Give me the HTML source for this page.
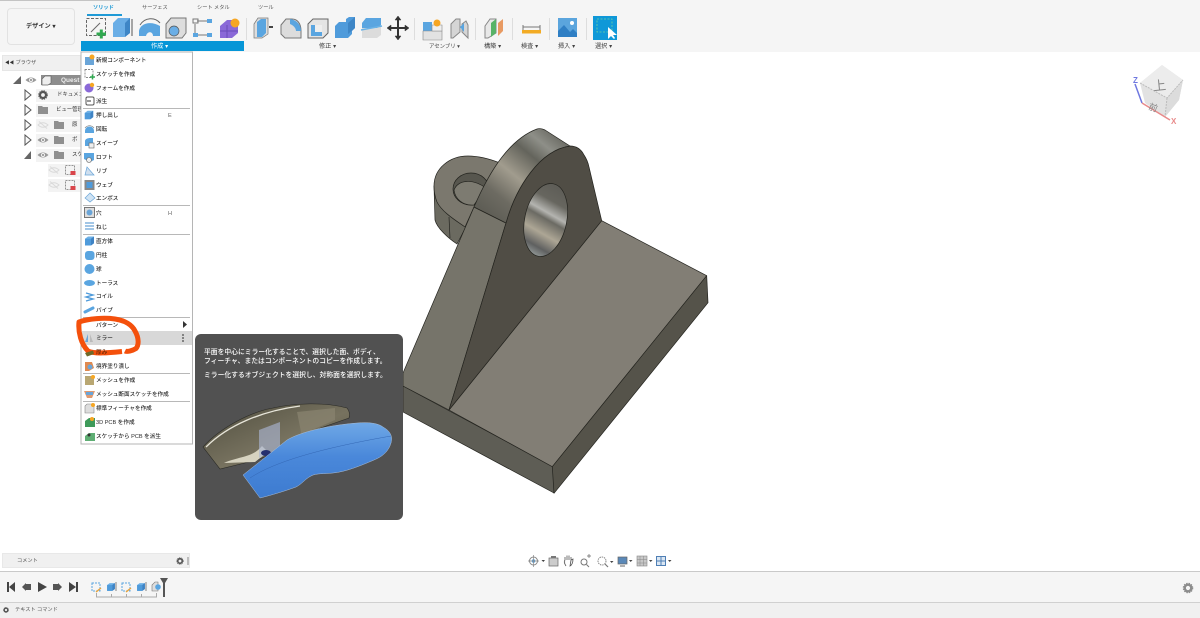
<!DOCTYPE html>
<html lang="ja"><head><meta charset="utf-8"><title>Fusion 360</title>
<style>
html,body{margin:0;padding:0;width:1200px;height:618px;overflow:hidden;background:#fff}
body{font-family:"Liberation Sans","Noto Sans CJK JP",sans-serif;position:relative}
.a{position:absolute}
.t{position:absolute;white-space:nowrap;line-height:10px;color:#444}
.m{position:absolute;left:95px;font-size:5.6px;line-height:10px;color:#2c2c2c;white-space:nowrap;font-weight:500;margin-top:1px}
.s{position:absolute;left:83px;width:107px;height:1px;background:#b8b8b8}
.l{position:absolute;font-size:6.2px;color:#444;line-height:8px;white-space:nowrap;margin-top:1px}
#w{position:absolute;left:0;top:0;width:1200px;height:618px;filter:blur(.35px)}
svg{position:absolute;left:0;top:0}
</style></head><body><div id="w">
<!-- toolbar -->
<div class="a" style="left:0;top:0;width:1200px;height:52px;background:#f5f5f5"></div>
<div class="a" style="left:0;top:0;width:120px;height:1px;background:#c4c4c4"></div>
<div class="a" style="left:7px;top:8px;width:68px;height:37px;border:1px solid #e2e2e2;border-radius:4px;background:#f5f5f5;box-sizing:border-box"></div>
<div class="t" style="left:26px;top:22px;font-size:6.2px;font-weight:700;color:#333">デザイン ▾</div>
<div class="t" style="left:93px;top:3px;font-size:5.2px;font-weight:700;color:#1f9ad6">ソリッド</div>
<div class="a" style="left:87px;top:14px;width:35px;height:2px;background:#1f9ad6"></div>
<div class="t" style="left:142px;top:3px;font-size:5.2px;color:#555">サーフェス</div>
<div class="t" style="left:197px;top:3px;font-size:5.2px;color:#555">シート メタル</div>
<div class="t" style="left:258px;top:3px;font-size:5.2px;color:#555">ツール</div>
<div class="a" style="left:81px;top:41px;width:163px;height:10px;background:#0696d7"></div>
<div class="t" style="left:151px;top:42px;font-size:6.2px;color:#fff">作成 ▾</div>
<div class="l" style="left:319px;top:42px">修正 ▾</div>
<div class="l" style="left:429px;top:42px;font-size:5.4px">アセンブリ ▾</div>
<div class="l" style="left:484px;top:42px">構築 ▾</div>
<div class="l" style="left:521px;top:42px">検査 ▾</div>
<div class="l" style="left:558px;top:42px">挿入 ▾</div>
<div class="l" style="left:595px;top:42px">選択 ▾</div>
<!-- browser -->
<div class="a" style="left:2px;top:55px;width:79px;height:16px;background:#f0f0f0;border:1px solid #e6e6e6;box-sizing:border-box"></div>
<div class="t" style="left:5px;top:58px;font-size:5.2px;color:#555"><span style="font-size:4.5px;color:#333">◀◀</span>&nbsp;ブラウザ</div>
<div class="a" style="left:41px;top:75px;width:40px;height:10px;background:#8d8d8d"></div>
<div class="t" style="left:61px;top:76px;font-size:6.5px;font-weight:700;color:#eee">Quest</div>
<div class="a" style="left:36px;top:89px;width:45px;height:13px;background:#f3f3f3"></div>
<div class="a" style="left:36px;top:104px;width:45px;height:13px;background:#f3f3f3"></div>
<div class="a" style="left:36px;top:119px;width:45px;height:13px;background:#f3f3f3"></div>
<div class="a" style="left:36px;top:134px;width:45px;height:13px;background:#f3f3f3"></div>
<div class="a" style="left:36px;top:149px;width:45px;height:13px;background:#f3f3f3"></div>
<div class="a" style="left:48px;top:164px;width:33px;height:13px;background:#f3f3f3"></div>
<div class="a" style="left:48px;top:179px;width:33px;height:13px;background:#f3f3f3"></div>
<div class="t" style="left:57px;top:90px;font-size:5.4px;color:#333">ドキュメント</div>
<div class="t" style="left:56px;top:105px;font-size:5.4px;color:#333">ビュー管理</div>
<div class="t" style="left:72px;top:120px;font-size:5.4px;color:#333">原</div>
<div class="t" style="left:72px;top:135px;font-size:5.4px;color:#333">ボ</div>
<div class="t" style="left:72px;top:150px;font-size:5.4px;color:#333">スケ</div>
<!-- bottom panels -->
<div class="a" style="left:2px;top:553px;width:188px;height:15px;background:#f0f0f0;border:1px solid #e8e8e8;box-sizing:border-box"></div>
<div class="t" style="left:17px;top:556px;font-size:5.2px;color:#555">コメント</div>
<div class="a" style="left:0;top:571px;width:1200px;height:1px;background:#c9c9c9"></div>
<div class="a" style="left:0;top:572px;width:1200px;height:31px;background:#f5f5f5"></div>
<div class="a" style="left:0;top:602px;width:1200px;height:1px;background:#d0d0d0"></div>
<div class="a" style="left:0;top:603px;width:1200px;height:15px;background:#f0f0f0"></div>
<div class="t" style="left:15px;top:605px;font-size:5.2px;color:#555">テキスト コマンド</div>

<svg width="1200" height="618" viewBox="0 0 1200 618">
<defs>
<linearGradient id="band" gradientUnits="userSpaceOnUse" x1="555" y1="135" x2="490" y2="215"><stop offset="0" stop-color="#6f6f68"/><stop offset=".14" stop-color="#8e8f88"/><stop offset=".3" stop-color="#64645c"/><stop offset=".55" stop-color="#a19c8e"/><stop offset=".8" stop-color="#6d6b62"/><stop offset="1" stop-color="#5f5e56"/></linearGradient>
<linearGradient id="hole" gradientUnits="userSpaceOnUse" x1="556" y1="188" x2="535" y2="254"><stop offset="0" stop-color="#5f5e58"/><stop offset=".2" stop-color="#67665f"/><stop offset=".38" stop-color="#b4b4b0"/><stop offset=".47" stop-color="#6b6a63"/><stop offset=".68" stop-color="#ada695"/><stop offset=".88" stop-color="#5f6060"/><stop offset="1" stop-color="#8d9392"/></linearGradient>
<linearGradient id="blue" x1="0" y1="0" x2="0" y2="1"><stop offset="0" stop-color="#6fa8e6"/><stop offset=".45" stop-color="#4a88da"/><stop offset="1" stop-color="#3d7bd0"/></linearGradient>
<linearGradient id="metal" x1="0" y1="0" x2="1" y2="1"><stop offset="0" stop-color="#4f4d3e"/><stop offset=".55" stop-color="#77725f"/><stop offset="1" stop-color="#55523f"/></linearGradient>
<g id="eye"><path d="M-5.500 0Q0-5 5.500 0Q0 5-5.500 0Z" fill="#9a9a9a"/><circle r="2" fill="#f3f3f3"/><circle r="1" fill="#888"/></g>
<g id="eyeoff" opacity=".35"><path d="M-5 0Q0-4.500 5 0Q0 4.500-5 0Z" fill="none" stroke="#aaa"/><path d="M-4-3.500L4 3.500" stroke="#aaa"/></g>
<path id="folder" d="M-5-4H-1L0-3H5V4H-5Z" fill="#8f8f8f"/>
<path id="tri" d="M-3-5L3 0L-3 5Z" fill="#f8f8f8" stroke="#555"/>
<g id="sk"><rect x="-4.500" y="-4.500" width="9" height="9" fill="none" stroke="#777" stroke-dasharray="2 1" stroke-width=".8"/><rect x="0.500" y="1" width="5" height="4" fill="#d9444a"/></g>
<g id="gear"><circle r="3" fill="none" stroke="#555" stroke-width="2.200"/><circle r="4.300" fill="none" stroke="#555" stroke-width="1" stroke-dasharray="1.300 1"/></g>
<g id="cube"><path d="M-6-3L-2-6H6V3L2 6H-6Z" fill="#6fb1e6"/><path d="M-6-3H2V6H-6Z" fill="#4f9bdb"/><path d="M2-3L6-6V3L2 6Z" fill="#3f83c4"/></g>
</defs>

<!-- 3D model -->
<g stroke="#24241f" stroke-width=".7" stroke-linejoin="round">
<path d="M434 186L435 220C437 228 448 238 457 244L480 200L440 190Z" fill="#6b6a60"/>
<path d="M449 217L450 238" fill="none"/>
<path d="M434 186C434 168 450 156 468 156C480 156 490 159 500 163L474 207L465 227C455 220 442 212 437 202C435 197 434 192 434 186Z" fill="#7b786e"/>
<ellipse cx="471" cy="189" rx="18" ry="16" fill="#57564e"/>
<path d="M454 190C458 180 472 178 486 188L474 205C462 206 455 198 454 190Z" fill="#7d7b71"/>
<path d="M403 386V412L554 493V467Z" fill="#5e5d55"/>
<path d="M449 410L601.700 220.700L706.700 275.700L552.300 466.700Z" fill="#827e75"/>
<path d="M706.700 275.700L708 302.700L554 493.300L552.300 466.700Z" fill="#55534a"/>
<path d="M403 373L474 207L506 223L449 410L403 386Z" fill="#76746a"/>
<path d="M449 410L506 223C516 187 540 150 570 146C576 146 581 149 584 155C586 158 588 162 589 167L601.700 220.700Z" fill="#504d45"/>
<path d="M474 207C490 170 510 139 537 129C540 128 543 129 545 130L570 146C540 150 516 187 506 223Z" fill="url(#band)"/>
<ellipse cx="545.700" cy="220" rx="21" ry="37" transform="rotate(12 545.700 220)" fill="url(#hole)"/>
</g>

<!-- menu -->
<rect x="81" y="52" width="111.500" height="392" fill="#fff" stroke="#b5b5b5" stroke-width="1"/>
<rect x="82" y="331" width="110" height="14" fill="#d8d8d8"/>

<!-- tooltip -->
<rect x="195" y="334" width="208" height="186" rx="6" fill="#515151"/>
<path d="M203 447C220 428 250 412 273 408C295 403 325 402 347 408C350 412 350 415 349 418C330 425 305 432 290 443C280 452 268 455 257 460L220 469Z" fill="url(#metal)" stroke="#2a2a25" stroke-width=".6"/>
<path d="M206 447C228 425 262 411 300 406" fill="none" stroke="#e7e5d9" stroke-width="1.300"/>
<path d="M224 463C240 456 252 458 262 446L268 452L255 462Z" fill="#d7d3c0"/>
<path d="M297 412L303 442L312 430L335 420V408Z" fill="#8a8470" opacity=".7"/>
<path d="M259 430L280 422V448L259 458Z" fill="#a9b3cf" opacity=".65"/>
<ellipse cx="266" cy="453" rx="5" ry="3" fill="#26306e"/>
<path d="M243 475L287 440C300 432 330 425 357 423C368 422 378 423 383 427C390 431 393 436 391 443C389 450 384 456 374 460C360 466 345 472 333 473C325 474 316 473 311 476C305 479 302 484 296 487C285 491 272 495 260 498Z" fill="url(#blue)" stroke="#a9bdd6" stroke-width=".5"/>
<path d="M250 478C280 458 340 445 391 436" fill="none" stroke="#3367b5" stroke-width=".5"/>

<!-- toolbar icons -->
<g>
<rect x="86.500" y="18.500" width="19" height="17" fill="none" stroke="#666" stroke-dasharray="3 1.500"/><path d="M91 32L100 23" stroke="#666"/><path d="M96.500 34H106M101.300 29.500V38.500" stroke="#2fa84f" stroke-width="3"/>
<path d="M113 23L118 18H130V33L125 37H113Z" fill="#6aaee6"/><path d="M125 23V37L130 33V18Z" fill="#3e86c6"/><path d="M132 19V36" stroke="#555"/>
<path d="M139 32C139 24 150 20 160 26V36H153C153 31 147 31 146 36H139Z" fill="#5aa5e0"/><path d="M140 25C145 17 155 17 160 23" stroke="#666" fill="none"/>
<path d="M166 24L171 18H186V33L182 38H166Z" fill="#ddd" stroke="#777"/><circle cx="174" cy="31" r="5" fill="#6aaee6" stroke="#555" stroke-width=".7"/>
<path d="M197 21H208M197 35H208M195 24V33" stroke="#777"/><rect x="193" y="19" width="5" height="4" fill="none" stroke="#777"/><rect x="207" y="19" width="5" height="4" fill="#5aa5e0"/><rect x="193" y="33" width="5" height="4" fill="#5aa5e0"/><rect x="207" y="33" width="5" height="4" fill="#5aa5e0"/>
<path d="M220 26L227 20H238V33L232 38H220Z" fill="#8a69d8"/><path d="M227 25V38M220 31H238" stroke="#6a4cb8"/><circle cx="235" cy="23" r="4.500" fill="#f6a623"/>
<rect x="246" y="18" width="1" height="22" fill="#ddd"/>
<path d="M254 24L258 18H268V34L262 38H254Z" fill="#ddd" stroke="#777" stroke-width=".7"/><path d="M257 22L261 19H266V33L262 37H257Z" fill="#5aa5e0"/><path d="M269 27H273" stroke="#444" stroke-width="2"/>
<path d="M281 25L286 19H292C297 19 301 23 301 31V38H285L281 34Z" fill="#dcdcdc" stroke="#777"/><path d="M290 19C297 20 301 25 301 31L296 31C296 28 293 25 290 24Z" fill="#5aa5e0"/>
<path d="M308 24L313 19H328V33L323 38H308Z" fill="#e4e4e4" stroke="#666"/><path d="M311 25H322V36H311Z" fill="#5aa5e0"/><path d="M315 25H322V32H315Z" fill="#eee"/>
<path d="M335 26L339 22H346V19L349 17H355V28L352 31V34L348 38H335Z" fill="#4f9bdb"/><path d="M348 23L355 17V28L348 34Z" fill="#3e86c6"/>
<path d="M362 23L366 18H381V35L377 38H362Z" fill="#dcdcdc"/><path d="M362 23L366 18H381V25L377 28H362Z" fill="#5aa5e0"/><path d="M361 30L382 26" stroke="#6ab2e6" stroke-width="1.500"/>
<g stroke="#333" stroke-width="2" fill="#333"><path d="M389 28H407M398 19V37" fill="none"/><path d="M398 16L395 20H401ZM398 40L395 36H401ZM387 28L391 25V31ZM409 28L405 25V31Z" stroke-width=".5"/></g>
<rect x="414" y="18" width="1" height="22" fill="#ddd"/>
<path d="M423 22H432V40H423Z" fill="#5aa5e0"/><path d="M423 31H442V40H423Z" fill="#e2e2e2" stroke="#888" stroke-width=".6"/><path d="M432 25H442V31H432Z" fill="#efefef" stroke="#888" stroke-width=".6"/><circle cx="437" cy="23" r="3.500" fill="#f6a623"/>
<path d="M451 24L456 19H460V32L453 38H451Z" fill="#d5d5d5" stroke="#888"/><path d="M462 24L466 21L468 25V38L462 32Z" fill="#d5d5d5" stroke="#888"/><path d="M460 27L464 23V32Z" fill="#5aa5e0"/>
<rect x="475" y="18" width="1" height="22" fill="#ddd"/>
<path d="M485 26L490 19H496V33L488 38H485Z" fill="#e8e8e8" stroke="#888"/><path d="M491 23L496 19V33L491 37Z" fill="#58b368"/><path d="M498 23L503 19V31L498 36Z" fill="#e89a62"/>
<rect x="512" y="18" width="1" height="22" fill="#ddd"/>
<path d="M523 25V30M540 25V30M523 27H540" stroke="#777"/><rect x="522" y="30" width="19" height="3.500" fill="#f2ab24"/>
<rect x="549" y="18" width="1" height="22" fill="#ddd"/>
<rect x="558" y="18" width="19" height="19" fill="#5ba5dd"/><circle cx="572" cy="23" r="2" fill="#fff"/><path d="M558 37V31L564 25L570 32L573 29L577 33V37Z" fill="#2f7fc4"/>
<rect x="586" y="18" width="1" height="22" fill="#ddd"/>
<rect x="593" y="16" width="24" height="24" fill="#0f98d8"/><rect x="597" y="19" width="15" height="13" fill="none" stroke="#6fd1a0" stroke-dasharray="2 1.500" stroke-width=".8"/><path d="M608 27L608 39L611 36L614 39L615 38L613 35L617 35Z" fill="#fff"/>
</g>

<!-- tree -->
<path d="M13 84L21 76V84Z" fill="#666"/>
<use href="#eye" x="31" y="80"/>
<path d="M42 79L45 76H51V83L48 85H42Z" fill="#eee" stroke="#666" stroke-width=".7"/>
<use href="#tri" x="28" y="95"/><use href="#tri" x="28" y="110"/><use href="#tri" x="28" y="125"/><use href="#tri" x="28" y="140"/>
<path d="M24 159L31 151V159Z" fill="#666"/>
<use href="#gear" x="43" y="95"/><use href="#folder" x="43" y="110"/>
<use href="#eyeoff" x="43" y="125"/><use href="#folder" x="59" y="125"/>
<use href="#eye" x="43" y="140"/><use href="#folder" x="59" y="140"/>
<use href="#eye" x="43" y="155"/><use href="#folder" x="59" y="155"/>
<use href="#eyeoff" x="54" y="170"/><use href="#sk" x="70" y="170"/>
<use href="#eyeoff" x="54" y="185"/><use href="#sk" x="70" y="185"/>

<!-- menu icons -->
<g>
<path d="M85 57H94V65H85Z" fill="#6aa5d8"/><circle cx="92" cy="57" r="2.500" fill="#f6a623"/>
<rect x="85" y="69.500" width="8" height="8" fill="none" stroke="#666" stroke-dasharray="2 1" stroke-width=".7"/><path d="M90 77H95M92.500 74.500V79.500" stroke="#2fa84f" stroke-width="1.500"/>
<circle cx="89" cy="88" r="4.500" fill="#8a69d8"/><circle cx="92" cy="85" r="2.200" fill="#f6a623"/>
<rect x="86" y="97" width="8" height="8" rx="1.500" fill="none" stroke="#555"/><path d="M87 101H91" stroke="#333"/>
<use href="#cube" x="0" y="0" transform="translate(89 115) scale(.7)"/>
<path d="M85 131C85 125 94 125 94 131V133H85Z" fill="#5aa5e0"/><path d="M85 128C87 125 92 125 94 128" stroke="#666" fill="none" stroke-width=".6"/>
<path d="M85 141C85 139 88 138 90 138H93V146H85Z" fill="#5aa5e0"/><rect x="89" y="143" width="5" height="5" fill="#eee" stroke="#666" stroke-width=".6"/>
<path d="M84 153L94 153V160L90 162L84 159Z" fill="#5aa5e0"/><circle cx="89" cy="160" r="2.500" fill="#eee" stroke="#666" stroke-width=".6"/>
<path d="M85 175L87 167L94 175Z" fill="#cfdfef" stroke="#6aa5d8" stroke-width=".7"/>
<rect x="84.500" y="180" width="10" height="10" fill="#888"/><rect x="86.500" y="182" width="6" height="6" fill="#4f9bdb"/>
<path d="M85 198L90 193L95 198L90 202Z" fill="#cfe3f4" stroke="#6aa5d8" stroke-width=".7"/>
<rect x="84.500" y="207.500" width="10" height="10" fill="#ddd" stroke="#777"/><circle cx="89.500" cy="212.500" r="3" fill="#6aa5d8"/>
<path d="M85 223H94M85 226H94M85 229H94" stroke="#6aa5d8" stroke-width="1.300"/>
<use href="#cube" transform="translate(89.500 241) scale(.75)"/>
<rect x="85" y="251" width="9.500" height="9" rx="3" fill="#5aa5e0"/>
<circle cx="89.500" cy="269" r="5" fill="#5aa5e0"/>
<ellipse cx="89.500" cy="283" rx="5.500" ry="3" fill="#5aa5e0"/>
<path d="M86 293L93 295L86 297L93 299L86 301" fill="none" stroke="#4f9bdb" stroke-width="1.400"/>
<path d="M85 312L93 308" stroke="#5aa5e0" stroke-width="3" stroke-linecap="round"/>
<path d="M85 342L88 334V342Z" fill="#6aa5d8"/><path d="M90 334L93 342H90Z" fill="#bbb"/>
<path d="M85 362H92L94 368L89 371H85Z" fill="#e08a50"/><circle cx="90" cy="367" r="2.500" fill="#6aa5d8"/>
<rect x="85" y="376" width="9" height="9" fill="#b9a772"/><circle cx="93" cy="377" r="2" fill="#f6a623"/>
<path d="M84 391H95L92 398H87Z" fill="#e09a70"/><rect x="86" y="392" width="7" height="3" fill="#6aa5d8"/>
<path d="M85 406L87 404H94V413H85Z" fill="#ddd" stroke="#888" stroke-width=".6"/><circle cx="93" cy="405" r="2" fill="#f6a623"/>
<path d="M85 427V421L89 418H95V427Z" fill="#3e9a5a"/><circle cx="92" cy="419" r="2" fill="#f6a623"/>
<path d="M85 441V436L89 433H95V441Z" fill="#5fae74"/><circle cx="89" cy="435" r="1.500" fill="#333"/>
<path d="M183 321L187 324.500L183 328Z" fill="#333"/>
<circle cx="183" cy="335" r=".9" fill="#444"/><circle cx="183" cy="338" r=".9" fill="#444"/><circle cx="183" cy="341" r=".9" fill="#444"/>
</g>

<!-- view cube -->
<path d="M1162 65L1183 80L1179 100L1165 117L1145 103L1140 83Z" fill="#e2e2e2"/>
<path d="M1162 65L1183 80L1167 98L1140 83Z" fill="#ececec"/>
<path d="M1183 80L1179 100L1165 117L1167 98Z" fill="#dcdcdc"/>
<path d="M1140 83L1167 98L1183 80M1167 98L1165 117" fill="none" stroke="#bbb" stroke-dasharray="2 1"/>
<path d="M1142 103L1135 84" stroke="#6f78e0" stroke-width="1.500"/><path d="M1142 103L1170 120" stroke="#e88a8a" stroke-width="1.500"/>
<text x="1133" y="83" font-size="8" fill="#6f78e0" font-weight="700">Z</text><text x="1171" y="124" font-size="8" fill="#e88a8a" font-weight="700">X</text>
<text x="1153" y="90" font-size="13" fill="#888" transform="rotate(-6 1160 85)">上</text>
<text x="1149" y="111" font-size="9" fill="#888" transform="rotate(20 1154 107)">前</text>

<!-- comment gear -->
<use href="#gear" transform="translate(180 561) scale(.75)"/>
<path d="M188 557V565" stroke="#888" stroke-width="1"/>
<use href="#gear" transform="translate(6 610) scale(.6)"/>
<use href="#gear" transform="translate(1188 588) scale(1.100)" opacity=".65"/>

<!-- timeline controls -->
<g fill="#444">
<path d="M7 582H9V592H7ZM15 582V592L9 587Z"/>
<path d="M22 587L26 583V591ZM26 584H31V590H26Z" fill="#555"/>
<path d="M38 582L47 587L38 592Z"/>
<path d="M62 587L58 583V591ZM58 584H53V590H58Z" fill="#555"/>
<path d="M69 582L76 587L69 592ZM76 582H78V592H76Z"/>
</g>
<g>
<rect x="92" y="583" width="8" height="8" fill="none" stroke="#5aa5e0" stroke-dasharray="2 1"/><path d="M96 592L101 588" stroke="#e8a23a" stroke-width="1.400"/>
<use href="#cube" transform="translate(111 587) scale(.65)"/><path d="M116 582V591" stroke="#555" stroke-width=".7"/>
<rect x="122" y="583" width="8" height="8" fill="none" stroke="#5aa5e0" stroke-dasharray="2 1"/><path d="M126 592L131 588" stroke="#e8a23a" stroke-width="1.400"/>
<use href="#cube" transform="translate(141 587) scale(.65)"/><path d="M146 582V591" stroke="#555" stroke-width=".7"/>
<path d="M152 591V585L155 582H158V591Z" fill="#ddd" stroke="#777" stroke-width=".6"/><circle cx="158" cy="587" r="2.800" fill="#5aa5e0"/>
<path d="M96.500 593V597H156.500V593M111.500 594V597M126.500 594V597M141.500 594V597" fill="none" stroke="#aaa"/>
<path d="M160 578H168L165 583V597H163V583Z" fill="#555"/>
</g>

<!-- nav bar -->
<g>
<circle cx="533.500" cy="561" r="4" fill="none" stroke="#888"/><circle cx="533.500" cy="561" r="1.800" fill="#5aa5e0"/><path d="M533.500 555V567M528 561H539" stroke="#888" stroke-width=".7"/>
<path d="M541.500 560H545L543.300 562Z" fill="#444"/>
<rect x="549" y="558" width="9" height="8" fill="#ccc" stroke="#666" stroke-width=".7"/><path d="M551 556H556V558H551Z" fill="#777"/>
<path d="M566 566C564 563 564 561 565 560V557M567 560V555.500M569 560V555.500M571 560V557M571 560L573 559C573 562 572 565 570 566Z" fill="#eee" stroke="#555" stroke-width=".8"/>
<circle cx="584" cy="562" r="3" fill="none" stroke="#777"/><path d="M586.500 564.500L589 567" stroke="#777"/><path d="M587 556H591M589 554V558" stroke="#666" stroke-width=".7"/>
<circle cx="602" cy="561" r="4" fill="none" stroke="#888" stroke-dasharray="1.500 .8"/><path d="M605 564L608 567" stroke="#777" stroke-width="1.200"/><path d="M610 561H613.500L611.700 563Z" fill="#444"/>
<rect x="618" y="557" width="9" height="7" fill="#5a88b8" stroke="#666" stroke-width=".7"/><path d="M620 566H625" stroke="#666"/><path d="M629 560H632.500L630.700 562Z" fill="#444"/>
<rect x="637" y="556" width="10" height="10" fill="#c8c8c8" stroke="#888" stroke-width=".6"/><path d="M640 556V566M643.500 556V566M637 559.500H647M637 563H647" stroke="#888" stroke-width=".5"/><path d="M649 560H652.500L650.700 562Z" fill="#444"/>
<rect x="656.500" y="556.500" width="9" height="9" fill="#dbe7f3" stroke="#4f7fb5"/><path d="M661 556V566M656 561H666" stroke="#4f7fb5"/><path d="M668 560H671.500L669.700 562Z" fill="#444"/>
</g>
</svg>

<!-- menu separators -->
<div class="s" style="top:108px"></div><div class="s" style="top:205px"></div><div class="s" style="top:234px"></div><div class="s" style="top:317px"></div><div class="s" style="top:373px"></div><div class="s" style="top:401px"></div>

<!-- menu text -->
<div class="m" style="left:96px;top:55px">新規コンポーネント</div>
<div class="m" style="left:96px;top:69px">スケッチを作成</div>
<div class="m" style="left:96px;top:83px">フォームを作成</div>
<div class="m" style="left:96px;top:96px">派生</div>
<div class="m" style="left:96px;top:110px">押し出し</div>
<div class="m" style="left:168px;top:110px;color:#666">E</div>
<div class="m" style="left:96px;top:124px">回転</div>
<div class="m" style="left:96px;top:138px">スイープ</div>
<div class="m" style="left:96px;top:152px">ロフト</div>
<div class="m" style="left:96px;top:166px">リブ</div>
<div class="m" style="left:96px;top:180px">ウェブ</div>
<div class="m" style="left:96px;top:193px">エンボス</div>
<div class="m" style="left:96px;top:208px">穴</div>
<div class="m" style="left:168px;top:208px;color:#666">H</div>
<div class="m" style="left:96px;top:222px">ねじ</div>
<div class="m" style="left:96px;top:236px">直方体</div>
<div class="m" style="left:96px;top:250px">円柱</div>
<div class="m" style="left:96px;top:264px">球</div>
<div class="m" style="left:96px;top:278px">トーラス</div>
<div class="m" style="left:96px;top:291px">コイル</div>
<div class="m" style="left:96px;top:305px">パイプ</div>
<div class="m" style="left:96px;top:320px">パターン</div>
<div class="m" style="left:96px;top:333px">ミラー</div>
<div class="m" style="left:96px;top:361px">境界塗り潰し</div>
<div class="m" style="left:96px;top:375px">メッシュを作成</div>
<div class="m" style="left:96px;top:389px">メッシュ断面スケッチを作成</div>
<div class="m" style="left:96px;top:403px">標準フィーチャを作成</div>
<div class="m" style="left:96px;top:417px">3D PCB を作成</div>
<div class="m" style="left:96px;top:431px">スケッチから PCB を派生</div>

<!-- tooltip text -->
<div class="t" style="left:204px;top:348px;font-size:6.8px;line-height:9px;color:#fff;font-weight:500">平面を中心にミラー化することで、選択した面、ボディ、<br>フィーチャ、またはコンポーネントのコピーを作成します。</div>
<div class="t" style="left:204px;top:371px;font-size:6.8px;line-height:9px;color:#fff;font-weight:500">ミラー化するオブジェクトを選択し、対称面を選択します。</div>

<!-- orange scribble on top -->
<svg width="1200" height="618" viewBox="0 0 1200 618">
<path d="M122 351.500C108 353 94 354 88 351C81 344 78 332 79 322C89 318.500 104 317.500 115 319C125 320.500 132 325 135 331C139 338 139 345 136 348.500C132 351 127 352 125 351" fill="none" stroke="#f4500c" stroke-width="5" stroke-linecap="butt" stroke-linejoin="round"/>
<path d="M85 353L93 350.500L94 354L87 356.500Z" fill="#6e6a2a"/>
</svg>
<div class="m" style="left:96px;top:347px;color:#6b2a08">厚み</div>
</div></body></html>
